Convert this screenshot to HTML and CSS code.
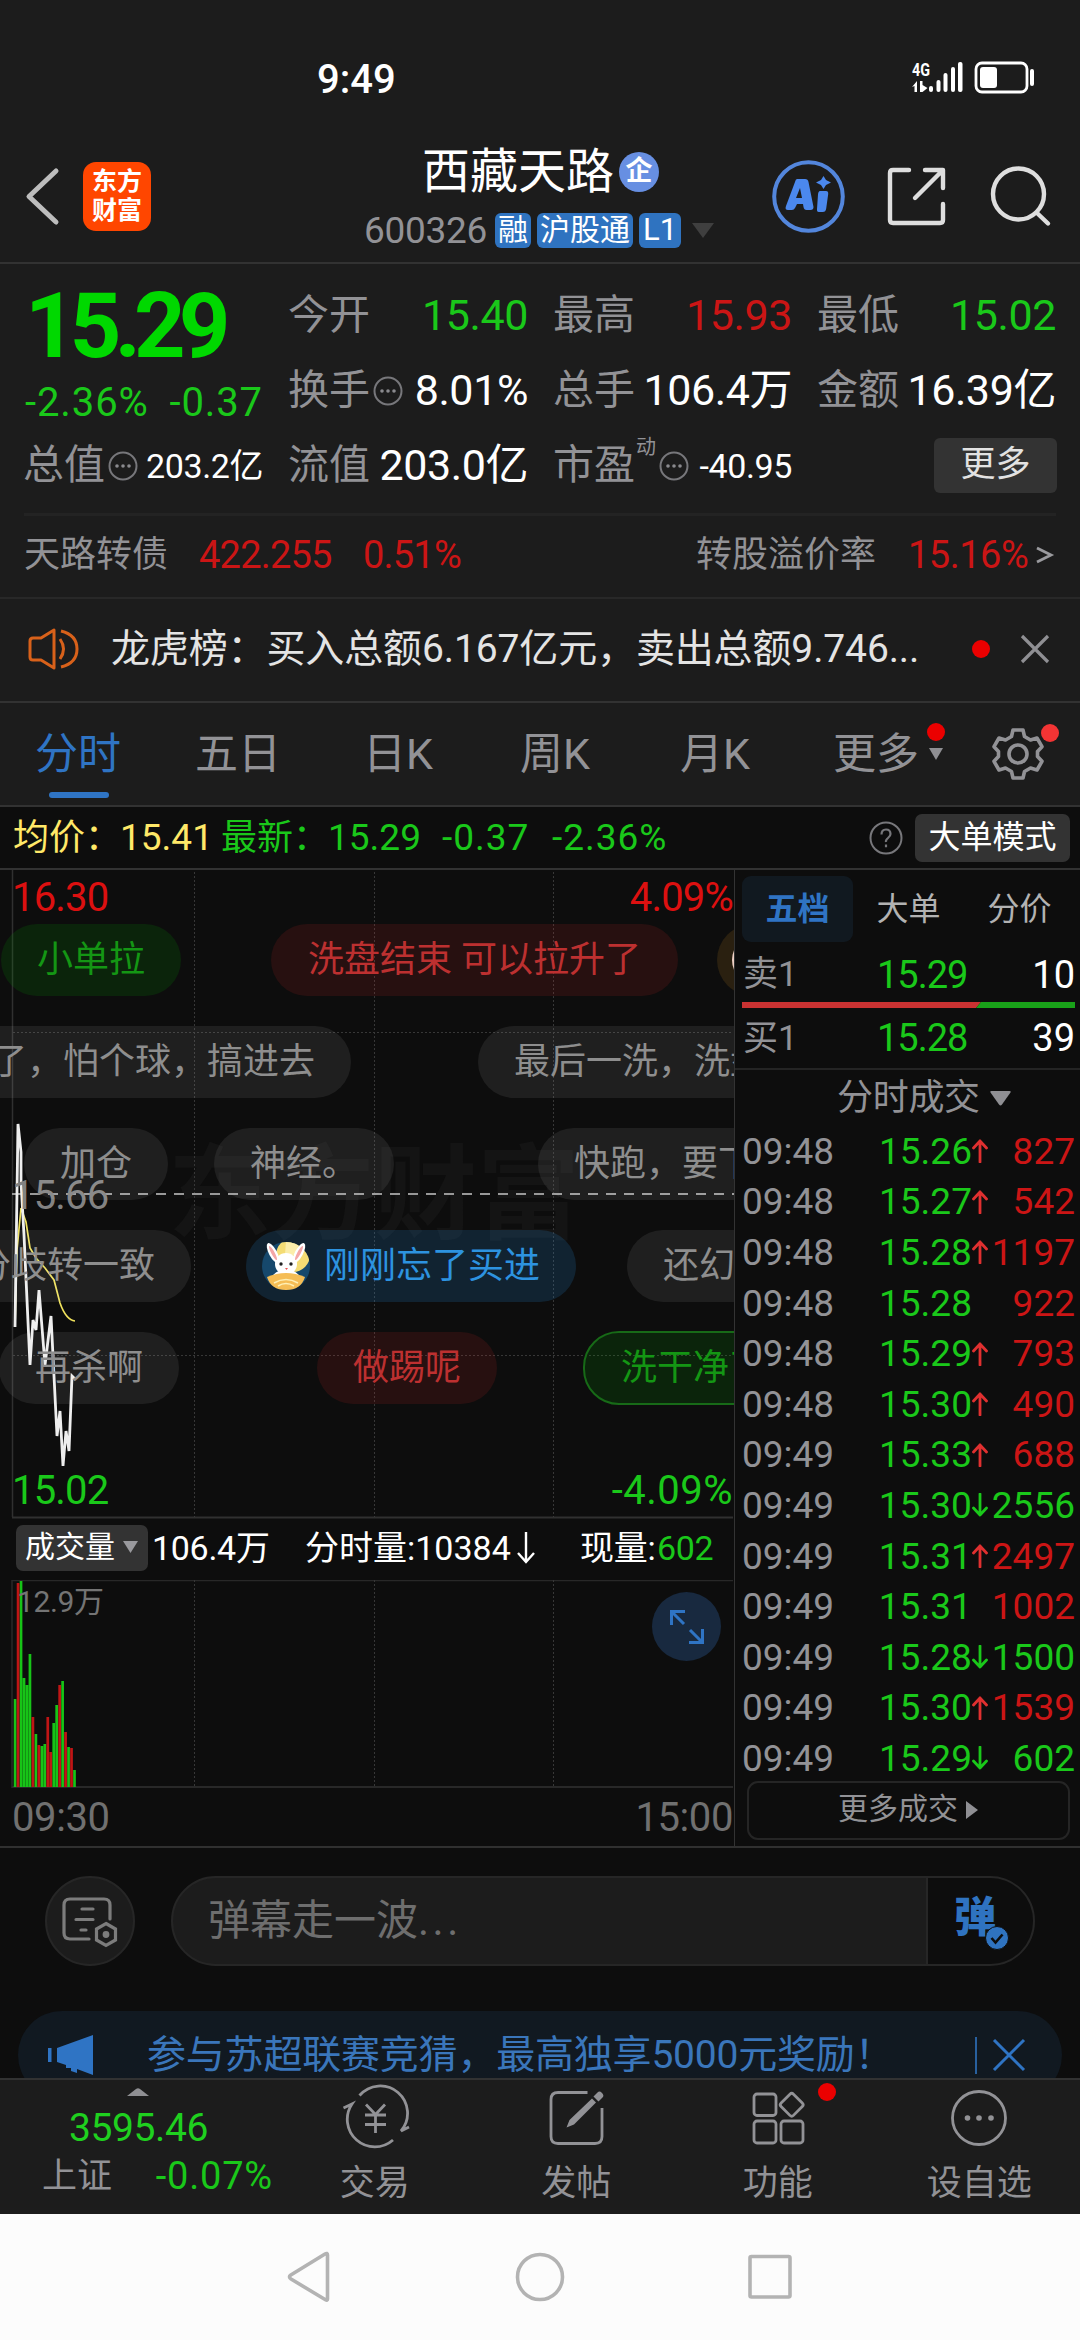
FILE: index.html
```html
<!DOCTYPE html>
<html lang="zh-CN">
<head>
<meta charset="utf-8">
<title>西藏天路 600326</title>
<link rel="stylesheet" href="styles.css">
</head>
<body>
<div class="phone">
  <div class="status">
    <span class="clock">9:49</span>
    <svg class="status-icons" viewBox="0 0 130 40" width="130" height="40">
      <text x="2" y="17" class="net" textLength="18" lengthAdjust="spacingAndGlyphs">4G</text>
      <g fill="#fff"><path d="M2 28l5-6v11h-2.500v-6zM10 22h2.500v4l5 3-5 4H10z"/>
      <rect x="19" y="27" width="4" height="6" rx="2"/><rect x="26.500" y="21" width="4" height="12" rx="2"/><rect x="33.500" y="14" width="4" height="19" rx="2"/><rect x="41" y="8" width="4" height="25" rx="2"/><rect x="48" y="3" width="4.500" height="30" rx="2"/>
      <rect x="70" y="8" width="17" height="21" rx="3"/><rect x="120" y="10" width="4" height="17" rx="2"/></g>
      <rect x="66" y="4" width="51" height="29" rx="6" fill="none" stroke="#fff" stroke-width="2.800"/>
    </svg>
  </div>

  <div class="header">
    <svg class="back" viewBox="0 0 36 60" width="36" height="60"><path d="M31 5L4 30.500 31 56" fill="none" stroke="#bdbdbd" stroke-width="5" stroke-linecap="round" stroke-linejoin="round"/></svg>
    <div class="logo"><span>东方</span><span>财富</span></div>
    <div class="title">
      <div class="name">西藏天路<i>企</i></div>
      <div class="code"><span class="num">600326</span><b>融</b><b>沪股通</b><b>L1</b><svg viewBox="0 0 22 15" width="22" height="15"><path d="M0 0h22L11 15z" fill="#3f3f3f"/></svg></div>
    </div>
    <svg class="tools" viewBox="760 156 320 80" width="320" height="80">
      <circle cx="808.500" cy="196.500" r="34.300" fill="none" stroke="#5386dc" stroke-width="4"/>
      <g fill="#4b88ee"><path fill-rule="evenodd" d="M797 179h8q3 0 3.500 3l5 25q0 3-3 3h-4q-2.500 0-3-3l-.5-3h-6l-2 4q-1 2-3 2h-4q-3.500 0-2-4l9-24q.7-3 2-3zM800 188l-4 10h6z"/><path d="M820 191h6q2.500 0 2.200 3l-2 14.500q-.5 3.500-3.500 3.500h-4q-2 0-1.700-3l1-14.500q.3-3.500 2-3.500zM823.500 176l2.500 4 5 2.500-5 2.500-2.500 4-2.500-4-5-2.500 5-2.500z"/></g>
      <g fill="none" stroke="#dedede" stroke-width="4.400" stroke-linecap="round" stroke-linejoin="round"><path d="M909 170h-16q-3 0-3 3v47q0 3 3 3h47q3 0 3-3v-16M925 170h18v18M942 171l-27 27"/><circle cx="1018.500" cy="194" r="25.500"/><path d="M1037 213l11 10.500"/></g>
    </svg>
  </div>

  <div class="quote">
    <div class="col first">
      <div class="price g">15.29</div>
      <div class="chg g"><span>-2.36%</span><span>-0.37</span></div>
      <div class="cell"><label>总值</label><svg class="more" viewBox="0 0 30 30"><use href="#dots"/></svg><span class="sm">203.2亿</span></div>
    </div>
    <div class="col">
      <div class="cell"><label>今开</label><span class="g">15.40</span></div>
      <div class="cell"><label>换手</label><svg class="more" viewBox="0 0 30 30"><g id="dots"><circle cx="15" cy="15" r="13.500" fill="none" stroke="#77777b" stroke-width="2"/><g fill="#8a8a8e"><circle cx="9" cy="15" r="1.800"/><circle cx="15" cy="15" r="1.800"/><circle cx="21" cy="15" r="1.800"/></g></g></svg><span>8.01%</span></div>
      <div class="cell"><label>流值</label><span>203.0亿</span></div>
    </div>
    <div class="col">
      <div class="cell"><label>最高</label><span class="r">15.93</span></div>
      <div class="cell"><label>总手</label><span>106.4万</span></div>
      <div class="cell"><label>市盈</label><sup>动</sup><svg class="more" viewBox="0 0 30 30"><use href="#dots"/></svg><span class="sm">-40.95</span></div>
    </div>
    <div class="col">
      <div class="cell"><label>最低</label><span class="g">15.02</span></div>
      <div class="cell"><label>金额</label><span>16.39亿</span></div>
      <div class="cell"><div class="morebtn">更多</div></div>
    </div>
  </div>

  <div class="bond"><span>天路转债</span><span class="r b1">422.255</span><span class="r b2">0.51%</span><span class="b3">转股溢价率</span><span class="r b4">15.16%</span><svg viewBox="0 0 20 20" width="20" height="20"><path d="M2 3l14 7-14 7" fill="none" stroke="#9a9a9e" stroke-width="2.800"/></svg></div>

  <div class="news">
    <svg viewBox="0 0 56 50" width="56" height="50" fill="none" stroke="#d8611a" stroke-width="3" stroke-linejoin="round"><path d="M26 6v38L13 36H5q-3 0-3-3V17q0-3 3-3h8zM32 15q7 10 0 20M33 7q16 4 16 18T33 43"/></svg>
    <span class="news-text">龙虎榜：买入总额6.167亿元，卖出总额9.746...</span>
    <i class="dot"></i>
    <svg viewBox="0 0 32 32" width="32" height="32"><path d="M3 3l26 26M29 3L3 29" stroke="#8f8f93" stroke-width="3.200"/></svg>
  </div>

  <div class="tabs">
    <span class="on">分时</span><span>五日</span><span>日K</span><span>周K</span><span>月K</span><span class="tab-more">更多<svg viewBox="0 0 14 12" width="14" height="12"><path d="M0 0h14L7 12z" fill="#8f8f93"/></svg><i class="dot"></i></span>
    <div class="gear"><svg viewBox="-28 -28 56 56" width="56" height="56" fill="none" stroke="#929296" stroke-width="3.600" stroke-linejoin="round"><path d="M-5-24h10l1.500 6.500 6 3.500 6.500-2 5 8.700-4.500 4.800v5l4.500 4.800-5 8.700-6.500-2-6 3.500L5 24H-5l-1.500-6.500-6-3.500-6.500 2-5-8.700 4.500-4.800v-5L-24-7.300l5-8.700 6.500 2 6-3.500z"/><circle r="9"/></svg><i class="dot light"></i></div>
  </div>

  <div class="avg"><span class="y a1">均价：</span><span class="y a2">15.41</span><span class="g a3">最新：</span><span class="g a4">15.29</span><span class="g a5">-0.37</span><span class="g a6">-2.36%</span><svg viewBox="0 0 34 34" width="34" height="34"><circle cx="17" cy="17" r="15.500" fill="none" stroke="#77777b" stroke-width="2"/><path d="M12.500 13.500q0-5 4.500-5t4.500 4.500q0 2-2.500 4t-2 4M17 23.500v2.800" fill="none" stroke="#77777b" stroke-width="2.200"/></svg><div class="modebtn">大单模式</div></div>

  <div class="main">
    <div class="left">
      <div class="kchart">
        <div class="watermark">东方财富</div>
        <svg class="plot" viewBox="0 870 734 650" width="734" height="650" fill="none">
          <g stroke="#303030" stroke-width="1.500"><path d="M12.500 870v647"/><path d="M12 1517.500h721" stroke-width="2"/></g>
          <g stroke="#373737" stroke-dasharray="2 2"><path d="M194.500 872v645M374.500 872v645M553.500 872v645M13 1032.500h720M13 1355.500h720"/></g>
          <path d="M12 1194h722" stroke="#989898" stroke-width="2" stroke-dasharray="10 8"/>
          <path d="M15 1327L17 1250 21 1208 26 1222 30 1248 36 1258 45 1268 54 1280 60 1303Q66 1320 75 1321" stroke="#efe15c" stroke-width="1.700"/>
          <path d="M15 1327L18 1124 21 1152 21 1182 24 1235 30 1365 33 1320 36 1330 39 1290 45 1365 51 1316 57 1436 60 1411 63 1466 66 1431 69 1451 72 1376 75 1379" stroke="#eee" stroke-width="2.800"/>
        </svg>
        <span class="lab tl r">16.30</span><span class="lab tr r">4.09%</span>
        <span class="lab mid">15.66</span>
        <span class="lab bl g">15.02</span><span class="lab br g">-4.09%</span>
        <div class="danmu">
          <span class="pill green p1">小单拉</span><span class="pill red p2">洗盘结束 可以拉升了</span><span class="pill gold p3"><i></i></span>
          <span class="pill p4">了，怕个球，搞进去</span><span class="pill p5">最后一洗，洗盘</span>
          <span class="pill p6">加仓</span><span class="pill p7">神经。</span><span class="pill p8">快跑，要下</span>
          <span class="pill p9">分歧转一致</span>
          <span class="pill blue p10"><svg viewBox="0 0 50 50" width="50" height="50"><defs><clipPath id="av"><circle cx="25" cy="25" r="24"/></clipPath></defs><g clip-path="url(#av)"><path fill="#16486c" d="M0 0h50v50H0z"/><circle cx="32" cy="14" r="17" fill="#f4dc74"/><path fill="#fbedaa" d="M25 0h14l-5 14h-10z"/></g><g fill="#fff"><ellipse cx="12" cy="12" rx="4" ry="11" transform="rotate(-28 12 12)"/><ellipse cx="38" cy="12" rx="4" ry="11" transform="rotate(28 38 12)"/><circle cx="25" cy="23" r="11"/><path d="M10 38q3-9 15-9t15 9z"/></g><g fill="#f4a6a6"><ellipse cx="12" cy="12" rx="1.700" ry="8" transform="rotate(-28 12 12)"/><ellipse cx="38" cy="12" rx="1.700" ry="8" transform="rotate(28 38 12)"/></g><path d="M6 36q19-8 38 0-4 13-19 13T6 36z" fill="#f5bd55"/><path d="M13 42q12-7 24 0M17 45q8-5 16 0" fill="none" stroke="#fff0b5" stroke-width="1.500"/><circle cx="20" cy="23" r="1.700" fill="#222"/><circle cx="30" cy="23" r="1.700" fill="#222"/><path d="M24 27h3l-1.500 2z" fill="#e55"/></svg>刚刚忘了买进</span>
          <span class="pill p11">还幻想</span>
          <span class="pill p12">再杀啊</span><span class="pill red p13">做踢呢</span><span class="pill green edged p14">洗干净了</span>
        </div>
      </div>
      <div class="volhead"><div class="volbtn">成交量<svg viewBox="0 0 15 12" width="15" height="12"><path d="M0 0h15L7.500 12z" fill="#99999d"/></svg></div><span class="v1">106.4万</span><span class="v2">分时量:10384</span><svg viewBox="0 0 20 34" width="20" height="34"><path d="M10 1v30M2 22l8 9 8-9" fill="none" stroke="#fff" stroke-width="2.400"/></svg><span class="v3">现量:</span><span class="v4 g">602</span></div>
      <div class="vchart">
        <svg class="plot" viewBox="0 1580 734 210" width="734" height="210" fill="none">
          <path d="M12 1788V1580.500h721" stroke="#282828" stroke-width="1.500"/><path d="M12 1787h721" stroke="#282828" stroke-width="2"/>
          <path stroke="#373737" stroke-dasharray="2 2" d="M194.500 1580v206M374.500 1580v206M553.500 1580v206"/>
          <path stroke="#17c317" stroke-width="2.700" d="M15.100 1787V1699M21.040 1787V1581M24.010 1787V1678M26.980 1787V1685M29.950 1787V1654M35.890 1787V1734M41.830 1787V1746M44.800 1787V1744M53.710 1787V1723M56.680 1787V1705M62.620 1787V1681M68.560 1787V1747M74.500 1787V1770"/>
          <path stroke="#c01515" stroke-width="2.700" d="M18.070 1787V1583M32.920 1787V1717M38.860 1787V1745M47.770 1787V1717M50.740 1787V1752M59.650 1787V1685M65.590 1787V1732M71.530 1787V1748"/>
        </svg>
        <span class="vmax">12.9万</span>
        <div class="expand"><svg viewBox="0 0 36 36" width="36" height="36" fill="none" stroke="#2f74c4" stroke-width="3"><path d="M2.500 16V2.500H16M3 3l12 12M33.500 20v13.500H20M33 33L21 21"/></svg></div>
      </div>
      <div class="times"><span>09:30</span><span>15:00</span></div>
    </div>

    <div class="right">
      <div class="rtabs"><span class="on">五档</span><span>大单</span><span>分价</span></div>
      <div class="lvl"><span>卖1</span><span class="g">15.29</span><span>10</span></div>
      <svg class="ratio" viewBox="0 0 333 6" width="333" height="6"><path d="M0 0h239l-5 6H0z" fill="#c93232"/><path d="M239 0h94v6h-99z" fill="#19a119"/></svg>
      <div class="lvl second"><span>买1</span><span class="g">15.28</span><span>39</span></div>
      <div class="rhead">分时成交<svg viewBox="0 0 21 15" width="21" height="15"><path d="M1.500 0h18q2 0 .8 1.800L12 13.500q-1.500 2-3 0L.7 1.800Q-.5 0 1.500 0z" fill="#8f8f93"/></svg></div>
      <svg width="0" height="0" class="defs"><defs><path id="up" d="M8 23V2M1.500 9L8 2l6.500 7"/><path id="dn" d="M8 1v21M1.500 15L8 22l6.500-7"/></defs></svg>
      <div class="ticks">
        <div><span>09:48</span><span class="g">15.26</span><svg class="ru"><use href="#up"/></svg><span class="r">827</span></div>
        <div><span>09:48</span><span class="g">15.27</span><svg class="ru"><use href="#up"/></svg><span class="r">542</span></div>
        <div><span>09:48</span><span class="g">15.28</span><svg class="ru"><use href="#up"/></svg><span class="r">1197</span></div>
        <div><span>09:48</span><span class="g">15.28</span><svg></svg><span class="r">922</span></div>
        <div><span>09:48</span><span class="g">15.29</span><svg class="ru"><use href="#up"/></svg><span class="r">793</span></div>
        <div><span>09:48</span><span class="g">15.30</span><svg class="ru"><use href="#up"/></svg><span class="r">490</span></div>
        <div><span>09:49</span><span class="g">15.33</span><svg class="ru"><use href="#up"/></svg><span class="r">688</span></div>
        <div><span>09:49</span><span class="g">15.30</span><svg class="gd"><use href="#dn"/></svg><span class="g">2556</span></div>
        <div><span>09:49</span><span class="g">15.31</span><svg class="ru"><use href="#up"/></svg><span class="r">2497</span></div>
        <div><span>09:49</span><span class="g">15.31</span><svg></svg><span class="r">1002</span></div>
        <div><span>09:49</span><span class="g">15.28</span><svg class="gd"><use href="#dn"/></svg><span class="g">1500</span></div>
        <div><span>09:49</span><span class="g">15.30</span><svg class="ru"><use href="#up"/></svg><span class="r">1539</span></div>
        <div><span>09:49</span><span class="g">15.29</span><svg class="gd"><use href="#dn"/></svg><span class="g">602</span></div>
      </div>
      <div class="rmore">更多成交<svg viewBox="0 0 12 18" width="12" height="18"><path d="M0 0l12 9-12 9z" fill="#8f8f93"/></svg></div>
    </div>
  </div>

  <div class="input-row">
    <div class="round"><svg viewBox="0 0 60 54" width="60" height="54" fill="none" stroke="#7c7c7c" stroke-width="3.200" stroke-linecap="round"><path d="M29 43H10q-6 0-6-6V9q0-6 6-6h34q6 0 6 6v14M22 13h11M16 23.500h17M21 34h5"/><path d="M46 27.500l9.500 5.500v11L46 49.500 36.500 44V33z"/><circle cx="46" cy="38.500" r="1.800" fill="#7c7c7c"/></svg></div>
    <div class="field"><span>弹幕走一波<span class="ell">...</span></span><div class="send">弹<svg viewBox="0 0 24 24" width="24" height="24"><circle cx="12" cy="12" r="11.500" fill="#2f73c0" stroke="#0d0d0d"/><path d="M6.500 12l4 4.500 7-8" fill="none" stroke="#0d0d0d" stroke-width="2.600"/></svg></div></div>
  </div>

  <div class="banner-wrap"><div class="banner">
    <svg viewBox="0 0 46 42" width="46" height="42" fill="#2f74c4"><path d="M0 14h3.500v14H0zM9 14L45 1v40l-16-6v4l-6-2v-3l-5 0v-3l-9-3z"/></svg>
    <span class="btext">参与苏超联赛竞猜，最高独享5000元奖励！</span><i class="sep"></i>
    <svg viewBox="0 0 34 34" width="34" height="34"><path d="M2 2l30 30M32 2L2 32" stroke="#2f74c4" stroke-width="3"/></svg>
  </div></div>

  <div class="nav">
    <div class="index"><svg viewBox="0 0 22 8" width="22" height="8"><path d="M0 8L9 1q2-1.500 4 0l9 7z" fill="#8f8f93"/></svg><div class="idx g">3595.46</div><div class="idx2"><span>上证</span><span class="g">-0.07%</span></div></div>
    <div class="item"><svg viewBox="340 2084 70 66" width="70" height="66" fill="none" stroke="#929296" stroke-width="2.800"><path d="M359.500 2095.500A27 27 0 0 1 401 2131l8-4M393 2140A27.500 27.500 0 0 1 352 2104l-8.500 4M366 2104.500l9.500 10 9.500-10M375.500 2114v19M365 2115h21M365 2124.500h21"/></svg><span>交易</span></div>
    <div class="item"><svg viewBox="542 2084 70 66" width="70" height="66" fill="none" stroke="#929296" stroke-width="2.800"><path d="M588.500 2092.500H559q-7 0-7 7v37q0 7 7 7h37q7 0 7-7V2108"/><path d="M593 2098.500l4 4L575 2124.500l-7.500 3 3-7.500zM594.500 2096.500l4-4q2-2 4.500.5t.5 4.500l-4 4z" fill="#929296" stroke="none"/></svg><span>发帖</span></div>
    <div class="item"><svg viewBox="743 2084 70 66" width="70" height="66" fill="none" stroke="#929296" stroke-width="2.800"><rect x="754" y="2094" width="22" height="21.500" rx="3"/><rect x="754" y="2121" width="22" height="22" rx="3"/><rect x="781" y="2121" width="22" height="22" rx="3"/><rect x="783" y="2096" width="17.500" height="17.500" rx="2.500" transform="rotate(45 791.700 2104.700)"/></svg><span>功能</span><i class="dot"></i></div>
    <div class="item"><svg viewBox="0 0 70 66" width="70" height="66"><circle cx="35" cy="34" r="26.500" fill="none" stroke="#929296" stroke-width="2.800"/><g fill="#929296"><circle cx="23.500" cy="34" r="2.800"/><circle cx="35" cy="34" r="2.800"/><circle cx="47" cy="34" r="2.800"/></g></svg><span>设自选</span></div>
  </div>

  <div class="sysnav">
    <svg viewBox="0 0 60 60" width="60" height="60"><path d="M47.500 8v44q0 2-2 .8L11 32q-3-2-.2-4L45 7q2.500-1.500 2.500 1z"/></svg>
    <svg viewBox="0 0 60 60" width="60" height="60"><circle cx="30" cy="30" r="22.500"/></svg>
    <svg viewBox="0 0 60 60" width="60" height="60"><rect x="10" y="9.500" width="40" height="40.500" rx="1.500"/></svg>
  </div>
</div>
</body>
</html>
```
FILE: styles.css
```css
* { box-sizing: border-box; }
body { margin: 0; background: #1c1c1c; font-family: Roboto, "Noto Sans CJK SC", sans-serif; color: #929296; }
.phone { width: 1080px; height: 2340px; overflow: hidden; display: flex; flex-direction: column; line-height: 1; white-space: nowrap; }
.phone > div { flex: none; }
svg { display: block; flex: none; }
i { font-style: normal; }
.g { color: #1ac81a; }
.r { color: #cb1515; }
.y { color: #ffe868; }
.dot { width: 18px; height: 18px; border-radius: 50%; background: #eb0000; flex: none; }

.status { height: 105px; display: flex; justify-content: space-between; padding: 59px 32px 0 317px; }
.clock { font-size: 40px; font-weight: 500; line-height: 42px; color: #fff; }
.status-icons { margin-right: 8px; }
.net { font: 700 19px Roboto, sans-serif; fill: #fff; }

.header { height: 159px; border-bottom: 2px solid #323232; display: flex; align-items: flex-start; padding-left: 25px; }
.back { margin-top: 61px; }
.logo { margin: 57px 0 0 22px; width: 68px; height: 69px; border-radius: 13px; background: #ff4600; color: #fff; font-size: 25px; font-weight: 700; display: flex; flex-direction: column; align-items: center; gap: 3px; padding-top: 7px; }
.logo span { height: 26px; line-height: 26px; }
.title { width: 353px; margin: 40px 0 0 213px; }
.name { display: flex; align-items: center; height: 54px; padding-left: 58px; font-size: 48px; color: #fff; }
.name i { width: 40px; height: 40px; margin-left: 5px; border-radius: 50%; background: #678fe2; font-size: 27px; line-height: 38px; font-weight: 700; text-align: center; }
.code { display: flex; align-items: center; height: 36px; margin-top: 13px; font-size: 37px; }
.code .num { width: 131px; letter-spacing: -.3px; }
.code b { height: 35px; border-radius: 6px; background: #2f73c0; color: #fff; font-weight: 400; font-size: 30px; line-height: 34px; padding: 0 3px; margin-right: 6px; }
.code b:nth-of-type(3) { padding: 0 4px; font-size: 31px; }
.code svg { margin-left: 5px; }
.tools { margin: 51px 0 0 43px; }

.quote { height: 249px; display: grid; grid-template-columns: 238px 238px 237px 237px; column-gap: 27px; padding-left: 25px; font-size: 43px; color: #fff; }
.col { padding-top: 14px; }
.cell { height: 75px; display: flex; align-items: center; }
.cell label { font-size: 41px; color: #929296; margin-left: -2px; }
.cell > span { margin-left: auto; letter-spacing: -.4px; }
.cell .sm { font-size: 34px; }
.more { width: 30px; height: 30px; margin-left: 3px; }
.cell sup { font-size: 20px; color: #929296; width: 20px; margin: 0 0 38px 1px; line-height: 20px; }
.price { height: 75px; font-size: 90px; font-weight: 700; line-height: 98px; color: #00d800; letter-spacing: -6.800px; }
.chg { height: 75px; display: flex; justify-content: space-between; align-items: center; font-size: 40px; padding-top: 24px; letter-spacing: .9px; }
.morebtn { margin-left: auto; width: 123px; height: 55px; margin-right: -1px; border-radius: 6px; background: #333; font-size: 35px; line-height: 53px; text-align: center; color: #e2e2e2; }

.bond { height: 84px; margin: 0 24px; border-top: 3px solid #232323; display: flex; align-items: center; font-size: 36px; padding-bottom: 3px; }
.bond .r { font-size: 38px; letter-spacing: -.8px; }
.bond .b4 { width: 127px; letter-spacing: -.5px; }
.b1 { margin-left: 31px; width: 164px; }
.b2 { width: 333px; }
.b3 { width: 212px; }

.news { height: 106px; border-top: 2px solid #282828; border-bottom: 2px solid #323232; display: flex; align-items: center; padding: 0 0 2px 28px; }
.news-text { margin-left: 27px; width: 861px; font-size: 39px; letter-spacing: -.13px; color: #e4e4e4; }
.news .dot { margin-right: 29px; }

.tabs { height: 104px; border-bottom: 2px solid #323232; display: flex; align-items: center; font-size: 43px; padding: 0 0 0 35px; }
.tabs > span { width: 160px; height: 100%; display: flex; align-items: center; position: relative; }
.tabs > span:nth-child(2) { width: 168px; }
.tabs > span:nth-child(3) { width: 157px; }
.tabs > span:nth-child(5) { width: 153px; }
.tabs > .tab-more { width: 157px; }
.tabs .on { color: #2f74c4; }
.tabs .on::after { content: ""; position: absolute; left: 14px; bottom: 7px; width: 60px; height: 6px; border-radius: 3px; background: #2f74c4; }
.tab-more svg { margin-left: 10px; }
.tab-more .dot { position: absolute; left: 94px; top: 20px; }
.gear { position: relative; }
.gear .dot { position: absolute; right: -13px; top: -2px; }
.light { background: #f33434; }

.avg { height: 63px; background: #0d0d0d; border-bottom: 2px solid #323232; display: flex; align-items: center; font-size: 37px; padding-left: 13px; }
.a1, .a3 { font-size: 36px; width: 107px; }
.a2 { width: 101px; }
.a4 { width: 114px; }
.a5 { width: 110px; letter-spacing: 1px; }
.a6 { width: 317px; letter-spacing: 1px; }
.modebtn { margin-left: 12px; width: 155px; height: 48px; border-radius: 7px; background: #333; color: #fff; font-size: 32px; line-height: 47px; text-align: center; }

.main { height: 978px; background: #0d0d0d; border-bottom: 2px solid #303030; display: flex; }
.left { width: 734px; }
.kchart { height: 650px; position: relative; overflow: hidden; }
.plot { position: absolute; left: 0; top: 0; }
.watermark { position: absolute; left: 168px; top: 266px; font-size: 103px; line-height: 120px; font-weight: 700; color: #141414; }
.lab { position: absolute; font-size: 40px; line-height: 40px; letter-spacing: -.8px; }
.lab.r { color: #dc1010; }
.tl, .tr { top: 8px; }
.tl, .bl, .mid { left: 12px; }
.tr, .br { right: 1px; }
.mid { top: 306px; color: #828282; }
.bl, .br { top: 601px; }
.br { letter-spacing: .5px; }
.pill { position: absolute; height: 72px; border-radius: 36px; background: rgba(255,255,255,.075); color: #8e8e8e; font-size: 36px; line-height: 69px; padding: 0 36px; display: flex; align-items: center; }
.green { background: rgba(0,190,0,.13); color: #149614; }
.red { background: rgba(255,50,50,.11); color: #bd3030; }
.gold { background: #2a2010; overflow: hidden; }
.gold i { position: absolute; left: 15px; top: 11px; width: 50px; height: 50px; border-radius: 50%; background: #eed0c5; }
.blue { background: rgba(40,150,230,.17); color: #2d93e0; }
.edged { border: 2px solid #176a17; height: 74px; }
.p1, .p2, .p3 { top: 54px; }
.p4, .p5 { top: 156px; }
.p6, .p7, .p8 { top: 258px; }
.p9, .p10, .p11 { top: 360px; }
.p12, .p13, .p14 { top: 462px; }
.p1 { left: 1px; } .p2 { left: 271px; padding: 0 37px; } .p3 { left: 717px; width: 100px; }
.p4 { left: -45px; } .p5 { left: 478px; }
.p6 { left: 24px; width: 144px; } .p7 { left: 214px; width: 180px; } .p8 { left: 538px; }
.p9 { left: -61px; } .p10 { left: 246px; padding-left: 15px; } .p10 svg { margin-right: 13px; } .p11 { left: 627px; }
.p12 { left: -1px; } .p13 { left: 317px; } .p14 { left: 583px; top: 461px; }

.volhead { height: 60px; display: flex; align-items: center; padding: 0 0 4px 16px; color: #fff; font-size: 34px; letter-spacing: -.3px; }
.volbtn { width: 132px; height: 46px; border-radius: 7px; background: #333; font-size: 30px; letter-spacing: 0; display: flex; align-items: center; padding: 0 0 2px 9px; }
.volbtn svg { margin-left: 8px; }
.v1 { margin-left: 4px; width: 153px; }
.v2 { width: 211px; letter-spacing: 0; }
.v3 { margin-left: 44px; width: 77px; }
.vchart { height: 209px; position: relative; }
.vmax { position: absolute; left: 17px; top: 6px; font-size: 30px; line-height: 32px; letter-spacing: -.4px; color: #747474; }
.expand { position: absolute; left: 652px; top: 12px; width: 69px; height: 69px; border-radius: 50%; background: #18293f; display: flex; align-items: center; justify-content: center; }
.times { display: flex; justify-content: space-between; padding: 9px 1px 0 12px; font-size: 40px; line-height: 40px; color: #707070; letter-spacing: -.4px; }

.right { width: 346px; border-left: 1px solid #333; padding-left: 7px; font-size: 37px; }
.rtabs { display: flex; padding-top: 6px; font-size: 32px; color: #b2b2b2; }
.rtabs span { width: 111px; height: 66px; line-height: 66px; text-align: center; border-radius: 9px; }
.rtabs .on { background: #111920; color: #2f74c4; font-weight: 700; }
.lvl { display: grid; grid-template-columns: 1fr 90px 108px; height: 60px; align-items: center; width: 333px; padding: 5px 0 0 1px; color: #929296; font-size: 38px; }
.lvl span:last-child { color: #fff; text-align: right; }
.lvl span:nth-child(2) { letter-spacing: -1px; text-align: right; }
.lvl .g { color: #1ac81a; }
.lvl span:first-child { font-size: 35px; }
.second { padding-top: 0; }
.ratio { width: 333px; }
.rhead { height: 58px; margin-left: -7px; border-top: 2px solid #242424; display: flex; align-items: center; font-size: 36px; padding: 0 0 0 102px; letter-spacing: -.3px; }
.rhead svg { margin: 0 0 0 10px; }
.defs { position: absolute; }
.ticks > div { display: flex; align-items: center; height: 50.600px; width: 333px; }
.ticks > div > span:first-child { width: 137px; }
.ticks svg { width: 16px; height: 24px; margin: 0 4px 0 3px; fill: none; stroke-width: 2.800; stroke-linecap: round; stroke-linejoin: round; }
.ticks span:nth-child(2) { width: 90px; }
.ticks span:last-child { flex: 1; text-align: right; }
.ru { stroke: #e03030; }
.gd { stroke: #1ac81a; }
.rmore { width: 323px; height: 59px; margin: -3px 0 0 5px; border: 2px solid #252525; border-radius: 11px; display: flex; align-items: center; font-size: 30px; padding: 0 0 2px 89px; }
.rmore svg { margin: 2px 0 0 8px; }

.input-row { height: 163px; background: #0d0d0d; display: flex; padding: 28px 45px 0; }
.round { width: 90px; height: 90px; border-radius: 50%; background: #1c1c1c; border: 2px solid #262626; display: flex; align-items: center; justify-content: center; padding-top: 4px; }
.field { margin-left: 36px; width: 864px; height: 90px; border: 2px solid #262626; border-radius: 45px; background: #1c1c1c; overflow: hidden; display: flex; align-items: center; justify-content: space-between; padding-left: 35px; font-size: 42px; color: #6e6e6e; }
.ell { letter-spacing: 3.500px; }
.send { width: 107px; height: 88px; background: #0d0d0d; border-left: 2px solid #262626; font-size: 42px; line-height: 82px; font-weight: 900; color: #2f73c0; padding-left: 26px; position: relative; }
.send svg { position: absolute; left: 57px; top: 49px; }
.banner-wrap { height: 67px; background: #0d0d0d; overflow: hidden; padding: 0 18px; }
.banner { height: 88px; border-radius: 44px; background: #111921; color: #3a76bb; display: flex; align-items: center; padding-left: 30px; font-size: 39px; }
.btext { margin-left: 53px; width: 828px; letter-spacing: -.2px; }
.sep { width: 2px; height: 37px; background: #28609f; margin-right: 15px; }

.nav { height: 136px; border-top: 2px solid #323232; display: flex; }
.index { width: 274px; padding: 8px 0 0 42px; }
.index > svg { margin-left: 85px; }
.idx { margin: 12px 0 0 27px; font-size: 39px; line-height: 40px; color: #1fd01f; letter-spacing: -.4px; }
.idx2 { display: flex; justify-content: space-between; align-items: center; height: 48px; width: 231px; margin-top: 4px; font-size: 35px; }
.idx2 .g { font-size: 38px; letter-spacing: .8px; }
.item { width: 201.500px; position: relative; display: flex; flex-direction: column; align-items: center; padding-top: 4px; font-size: 35px; }
.item span { margin-top: 16px; }
.item .dot { position: absolute; left: 141px; top: 3px; }
.sysnav { flex: 1 0 auto !important; background: #fcfcfc; display: flex; align-items: center; justify-content: center; gap: 170px; }
.sysnav svg { fill: none; stroke: #b3b3b3; stroke-width: 3.600; stroke-linejoin: round; }
```
